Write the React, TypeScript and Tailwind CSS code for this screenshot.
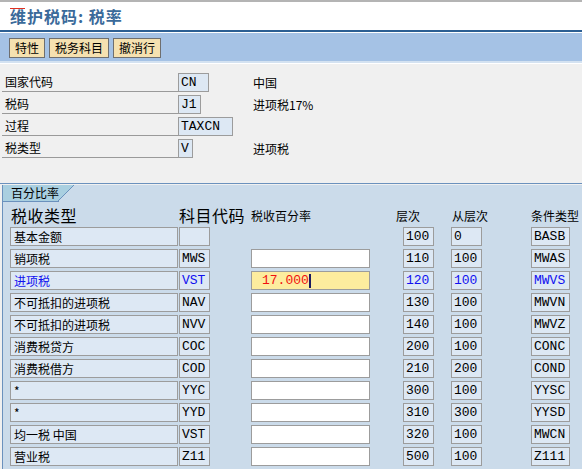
import React from "react";

const cjk = "font-['Noto_Sans_CJK_SC','Noto_Sans',sans-serif]";
const mono = "font-['Liberation_Mono','Noto_Sans_CJK_SC',monospace]";
const box = "h-[19px] border border-[#9c9c9c] bg-[#dde8f4] flex items-center leading-none";

type Row = {
  name: string;
  acct: string;
  pct?: string;
  level: string;
  from: string;
  cond: string;
  noPct?: boolean;
  active?: boolean;
};

const rows: Row[] = [
  { name: "基本金额", acct: "", level: "100", from: "0", cond: "BASB", noPct: true },
  { name: "销项税", acct: "MWS", level: "110", from: "100", cond: "MWAS" },
  { name: "进项税", acct: "VST", pct: "17.000", level: "120", from: "100", cond: "MWVS", active: true },
  { name: "不可抵扣的进项税", acct: "NAV", level: "130", from: "100", cond: "MWVN" },
  { name: "不可抵扣的进项税", acct: "NVV", level: "140", from: "100", cond: "MWVZ" },
  { name: "消费税贷方", acct: "COC", level: "200", from: "100", cond: "CONC" },
  { name: "消费税借方", acct: "COD", level: "210", from: "200", cond: "COND" },
  { name: "*", acct: "YYC", level: "300", from: "100", cond: "YYSC" },
  { name: "*", acct: "YYD", level: "310", from: "300", cond: "YYSD" },
  { name: "均一税 中国", acct: "VST", level: "320", from: "100", cond: "MWCN" },
  { name: "营业税", acct: "Z11", level: "500", from: "100", cond: "Z111" },
];

const headerFields = [
  { label: "国家代码", value: "CN", w: "w-[31px]", desc: "中国" },
  { label: "税码", value: "J1", w: "w-[23px]", desc: "进项税17%" },
  { label: "过程", value: "TAXCN", w: "w-[55px]", desc: "" },
  { label: "税类型", value: "V", w: "w-[15px]", desc: "进项税" },
];

function ToolButton({ children }: { children: React.ReactNode }) {
  return (
    <button className={`h-[20px] px-[5px] border border-[#6f6f6f] bg-[#f5e1b0] text-[12px] text-black leading-none ${cjk}`}>
      {children}
    </button>
  );
}

export default function App() {
  return (
    <div className="w-[582px] h-[469px] overflow-hidden bg-[#f0f0f0] relative">
      {/* title */}
      <div className="h-[30px] bg-white border-t-2 border-[#b4b4b4] flex items-center pl-[10px] relative">
        <span className={`text-[16px] font-bold text-[#3a6a9a] tracking-[1px] ${cjk}`}>维护税码: 税率</span>
        <div className="absolute left-[10px] top-[6px] w-[15px] h-[1px] bg-[#e03020]" />
      </div>
      <div className="h-[2px] bg-[#2c5f93]" />
      <div className="h-[1px] bg-white" />

      {/* toolbar */}
      <div className="h-[28px] bg-[#a5c2e5] flex items-center gap-[4px] pl-[9px] pt-[2px]">
        <ToolButton>特性</ToolButton>
        <ToolButton>税务科目</ToolButton>
        <ToolButton>撤消行</ToolButton>
      </div>
      <div className="h-[2px] bg-[#d4e2f1]" />
      <div className="h-[1px] bg-white" />

      {/* header fields */}
      <div className="h-[119px] pt-[9px] flex flex-col gap-[3px]">
        {headerFields.map((f) => (
          <div key={f.label} className="flex items-end h-[19px]">
            <div className={`w-[176px] ml-[2px] h-[19px] border-b border-[#9a9a9a] pl-[3px] text-[12px] text-black leading-[18px] ${cjk}`}>
              {f.label}
            </div>
            <div className={`${box} ${f.w} pl-[2px] text-[13px] text-black ${mono}`}>{f.value}</div>
            <div className={`ml-auto w-[329px] text-[12px] text-black leading-[18px] ${cjk}`}>{f.desc}</div>
          </div>
        ))}
      </div>

      {/* percentage panel */}
      <div className="h-[1px] bg-[#6b91bd]" />
      <div className="ml-[2px] border-l border-[#6b91bd] bg-[#cbdbea] h-[286px]">
        <div className="relative h-[16px] w-[71px] mt-[1px]">
          <div className="absolute inset-0 bg-[#a9cfe0] [clip-path:polygon(0_0,100%_0,78%_100%,0_100%)]" />
          <svg className="absolute inset-0" width="71" height="16">
            <line x1="71" y1="0" x2="55" y2="16" stroke="#6b91bd" strokeWidth="1" />
          </svg>
          <span className={`relative block pl-[8px] text-[12px] text-black leading-[16px] ${cjk}`}>百分比率</span>
        </div>
        <div className="h-[1px] bg-[#6b91bd] w-[56px]" />

        {/* column headings */}
        <div className={`flex items-center h-[25px] text-black leading-none ${cjk}`}>
          <div className="w-[176px] pl-[8px] text-[16px] tracking-[0.5px]">税收类型</div>
          <div className="w-[72px] text-[16px] tracking-[0.5px]">科目代码</div>
          <div className="w-[145px] text-[12px] pt-[2px]">税收百分率</div>
          <div className="w-[56px] text-[12px] pt-[2px]">层次</div>
          <div className="w-[79px] text-[12px] pt-[2px]">从层次</div>
          <div className="text-[12px] pt-[2px]">条件类型</div>
        </div>

        <div className="flex flex-col gap-[3px]">
          {rows.map((r, i) => {
            const tc = r.active ? "text-[#1010f0]" : "text-black";
            return (
              <div key={i} className="flex items-center h-[19px]">
                <div className={`${box} ml-[7px] w-[168px] pl-[3px] text-[12px] ${tc} ${cjk}`}>{r.name}</div>
                <div className={`${box} ml-[1px] w-[31px] pl-[2px] text-[13px] ${tc} ${mono}`}>{r.acct}</div>
                {r.noPct ? (
                  <div className="ml-[41px] w-[119px]" />
                ) : r.active ? (
                  <div className={`ml-[41px] w-[119px] h-[19px] border border-[#9c9c9c] bg-[#fdec9e] flex items-center pl-[10px] text-[13px] text-[#f01010] leading-none ${mono}`}>
                    {r.pct}
                    <span className="inline-block w-[2px] h-[14px] bg-[#1a1a60]" />
                  </div>
                ) : (
                  <div className="ml-[41px] w-[119px] h-[19px] border border-[#9c9c9c] bg-white" />
                )}
                <div className={`${box} ml-[33px] w-[31px] pl-[2px] text-[13px] ${tc} ${mono}`}>{r.level}</div>
                <div className={`${box} ml-[17px] w-[31px] pl-[2px] text-[13px] ${tc} ${mono}`}>{r.from}</div>
                <div className={`${box} ml-[49px] w-[39px] pl-[2px] text-[13px] ${tc} ${mono}`}>{r.cond}</div>
              </div>
            );
          })}
        </div>
      </div>
    </div>
  );
}
